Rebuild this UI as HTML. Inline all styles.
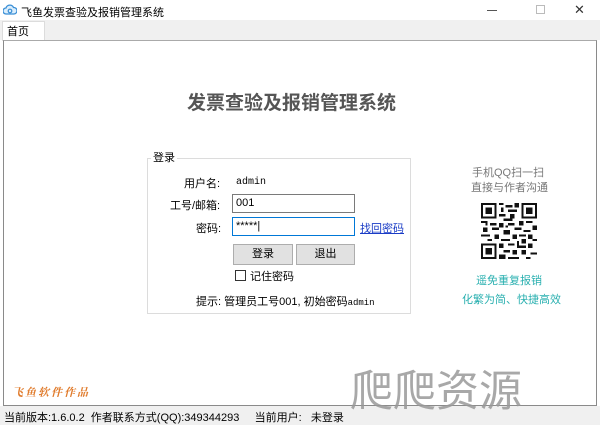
<!DOCTYPE html>
<html><head><meta charset="utf-8"><style>
*{margin:0;padding:0;box-sizing:border-box}
body{width:600px;height:425px;background:#fff;position:relative;overflow:hidden;font-family:"Liberation Sans","Noto Sans CJK SC",sans-serif;font-size:12px;color:#000}
.a{position:absolute;white-space:nowrap}
.inp{position:absolute;background:#fff;border:1px solid #7a7a7a;height:19px;font-size:11px;padding:2px 3px}
.btn{position:absolute;background:#e1e1e1;border:1px solid #adadad;height:21px;text-align:center;line-height:19px;font-size:12px}
</style></head><body>
<svg class="a" style="left:3px;top:3px" width="14" height="14" viewBox="0 0 14 14"><path d="M3 11 A3 3 0 0 1 3 5 A4 4 0 0 1 10.5 4.5 A3.2 3.2 0 0 1 11 11 Z" fill="#dbeefc" stroke="#3a8fd6" stroke-width="1.3"/><circle cx="7" cy="8" r="1.8" fill="none" stroke="#3a8fd6" stroke-width="1.2"/></svg>
<div class="a" style="left:21px;top:4px;font-size:11px">飞鱼发票查验及报销管理系统</div>
<div class="a" style="left:487px;top:10px;width:10px;height:1px;background:#555"></div>
<div class="a" style="left:536px;top:5px;width:9px;height:9px;border:1px solid #bbb"></div>
<div class="a" style="left:574px;top:2px;font-size:13px;color:#333">✕</div>
<div class="a" style="left:0;top:20px;width:600px;height:20px;background:#f0f0f0"></div>
<div class="a" style="left:2px;top:21px;width:43px;height:20px;background:#fff;border:1px solid #dcdcdc;border-bottom:none"></div>
<div class="a" style="left:7px;top:23px;font-size:11px">首页</div>
<div class="a" style="left:3px;top:40px;width:594px;height:366px;border:1px solid #8a8a8a;border-top-color:#aaa;background:#fff"></div>
<div class="a" style="left:187px;top:88px;font-size:19px;font-weight:bold;color:#555">发票查验及报销管理系统</div>
<div class="a" style="left:147px;top:158px;width:264px;height:156px;border:1px solid #dcdcdc"></div>
<div class="a" style="left:151px;top:149px;background:#fff;padding:0 2px;font-size:11px">登录</div>
<div class="a" style="left:184px;top:175px;font-size:11px">用户名:</div>
<div class="a" style="left:236px;top:177px;font-family:'Liberation Mono',monospace;font-size:10px">admin</div>
<div class="a" style="left:170px;top:197px;font-size:11px">工号/邮箱:</div>
<div class="inp" style="left:232px;top:194px;width:123px">001</div>
<div class="a" style="left:196px;top:220px;font-size:11px">密码:</div>
<div class="inp" style="left:232px;top:217px;width:123px;border-color:#0078d7">*****|</div>
<div class="a" style="left:360px;top:220px;color:#1a3cc6;text-decoration:underline;font-size:11px">找回密码</div>
<div class="btn" style="left:233px;top:244px;width:60px;font-size:11px">登录</div>
<div class="btn" style="left:296px;top:244px;width:59px;font-size:11px">退出</div>
<div class="a" style="left:235px;top:270px;width:11px;height:11px;border:1px solid #333"></div>
<div class="a" style="left:250px;top:268px;font-size:11px">记住密码</div>
<div class="a" style="left:196px;top:293px;font-size:11px">提示: 管理员工号001, 初始密码<span style="font-family:'Liberation Mono',monospace;font-size:9px">admin</span></div>
<div class="a" style="left:472px;top:164px;color:#777;font-size:11px">手机QQ扫一扫</div>
<div class="a" style="left:471px;top:179px;color:#777;font-size:11px">直接与作者沟通</div>
<svg class="a" style="left:481px;top:203px" width="56" height="56" viewBox="0 0 25 25" shape-rendering="crispEdges">
<rect width="25" height="25" fill="#fff"/>
<g fill="#111"><path d="M0 0h7v7h-7zM18 0h7v7h-7zM0 18h7v7h-7z"/></g>
<g fill="#fff"><path d="M1 1h5v5h-5zM19 1h5v5h-5zM1 19h5v5h-5z"/></g>
<g fill="#111"><path d="M2 2h3v3h-3zM20 2h3v3h-3zM2 20h3v3h-3z"/>
<path d="M8 0h2v1h-2zM11 1h3v1h-3zM9 2h1v2h-1zM12 3h4v1h-4zM15 0h2v2h-2zM8 5h3v1h-3zM13 5h2v2h-2zM10 7h4v1h-4zM0 8h3v1h-3zM4 9h3v1h-3zM8 9h2v2h-2zM12 9h3v1h-3zM17 8h2v2h-2zM20 8h3v1h-3zM23 10h2v2h-2zM1 11h2v2h-2zM5 11h3v1h-3zM10 12h3v2h-3zM15 11h3v1h-3zM19 12h3v1h-3zM0 14h4v1h-4zM6 14h2v2h-2zM14 14h2v2h-2zM17 14h3v1h-3zM21 14h2v2h-2zM3 16h2v1h-2zM9 16h4v1h-4zM18 16h2v2h-2zM23 16h2v1h-2zM8 18h2v2h-2zM12 18h3v1h-3zM16 19h4v1h-4zM21 18h2v2h-2zM10 21h3v1h-3zM14 21h2v2h-2zM18 21h2v2h-2zM22 22h3v1h-3zM8 23h3v2h-3zM12 24h5v1h-5zM20 24h2v1h-2zM16 17h1v2h-1zM11 10h1v1h-1zM2 9h1v1h-1z"/></g>
</svg>
<div class="a" style="left:476px;top:272px;color:#2ab0b0;font-size:11px">遥免重复报销</div>
<div class="a" style="left:462px;top:291px;color:#2ab0b0;font-size:11px">化繁为简、快捷高效</div>
<div class="a" style="left:12px;top:384px;color:#e07a2a;font-size:11px;font-weight:bold;font-style:italic;letter-spacing:2px;font-family:'Noto Serif CJK SC',serif">飞鱼软件作品</div>
<div class="a" style="left:0;top:406px;width:600px;height:19px;background:#f0f0f0"></div>
<div class="a" style="left:4px;top:409px;font-size:11px">当前版本:1.6.0.2&nbsp; 作者联系方式(QQ):349344293&nbsp;&nbsp;&nbsp;&nbsp; 当前用户:&nbsp;&nbsp; 未登录</div>
<div class="a" style="left:350px;top:362px;font-size:43px;color:#999;opacity:.85;letter-spacing:0px;font-family:'Noto Sans CJK SC',sans-serif;font-weight:400;line-height:52px">爬爬资源</div>
</body></html>
